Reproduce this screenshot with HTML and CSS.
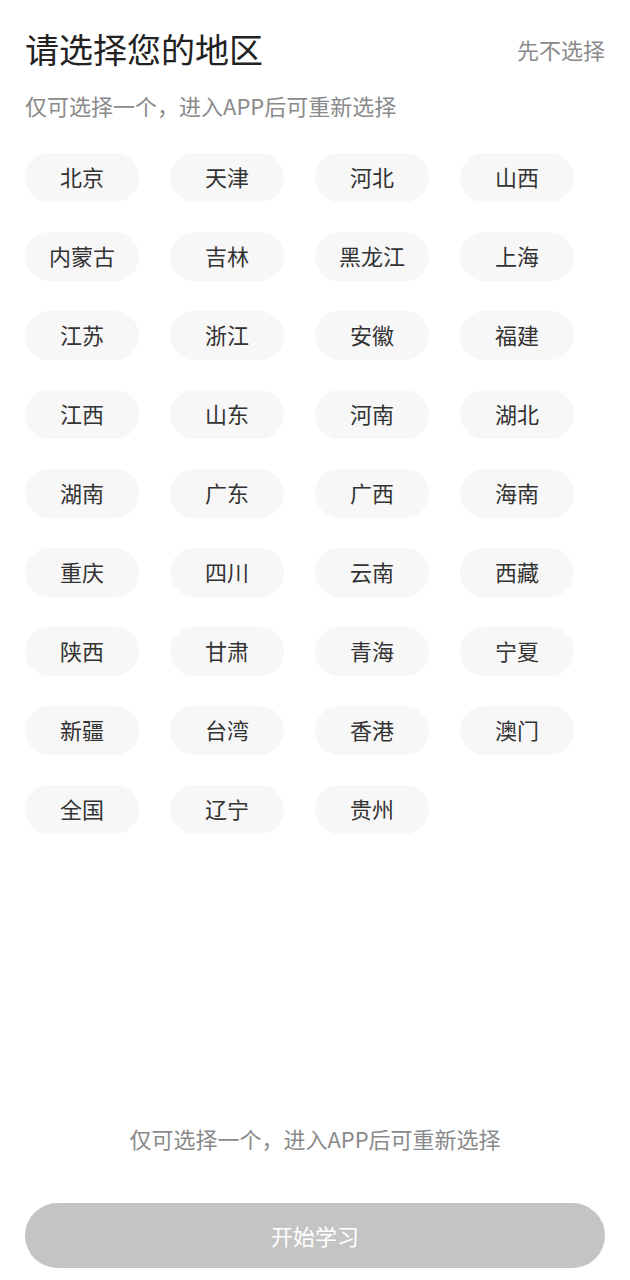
FILE: index.html
```html
<!DOCTYPE html>
<html lang="zh-CN">
<head>
<meta charset="utf-8">
<title>请选择您的地区</title>
<link rel="stylesheet" href="styles.css">
</head>
<body>
<div class="page">
  <header class="header">
    <h1 class="title">请选择您的地区</h1>
    <span class="skip">先不选择</span>
  </header>
  <p class="subtitle">仅可选择一个，进入APP后可重新选择</p>
  <div class="grid">
    <div class="chip">北京</div>
    <div class="chip">天津</div>
    <div class="chip">河北</div>
    <div class="chip">山西</div>
    <div class="chip">内蒙古</div>
    <div class="chip">吉林</div>
    <div class="chip">黑龙江</div>
    <div class="chip">上海</div>
    <div class="chip">江苏</div>
    <div class="chip">浙江</div>
    <div class="chip">安徽</div>
    <div class="chip">福建</div>
    <div class="chip">江西</div>
    <div class="chip">山东</div>
    <div class="chip">河南</div>
    <div class="chip">湖北</div>
    <div class="chip">湖南</div>
    <div class="chip">广东</div>
    <div class="chip">广西</div>
    <div class="chip">海南</div>
    <div class="chip">重庆</div>
    <div class="chip">四川</div>
    <div class="chip">云南</div>
    <div class="chip">西藏</div>
    <div class="chip">陕西</div>
    <div class="chip">甘肃</div>
    <div class="chip">青海</div>
    <div class="chip">宁夏</div>
    <div class="chip">新疆</div>
    <div class="chip">台湾</div>
    <div class="chip">香港</div>
    <div class="chip">澳门</div>
    <div class="chip">全国</div>
    <div class="chip">辽宁</div>
    <div class="chip">贵州</div>
  </div>
  <footer class="footer">
    <p class="note">仅可选择一个，进入APP后可重新选择</p>
    <button class="start" type="button">开始学习</button>
  </footer>
</div>
</body>
</html>
```

FILE: styles.css
```css
* { box-sizing: border-box; }
html, body {
  margin: 0;
  padding: 0;
  background: #ffffff;
  font-family: "Noto Sans CJK SC", "Noto Sans", sans-serif;
}
.page {
  height: 1280px;
  padding: 29px 25px 12px;
  display: flex;
  flex-direction: column;
}
.header {
  display: flex;
  justify-content: space-between;
  align-items: center;
  height: 40px;
}
.title {
  margin: 0;
  font-size: 34px;
  line-height: 40px;
  font-weight: 400;
  color: #222222;
}
.skip {
  font-size: 22px;
  line-height: 40px;
  color: #8a8a8a;
}
.subtitle {
  margin: 21px 0 0;
  font-size: 22px;
  line-height: 30px;
  color: #8a8a8a;
}
.grid {
  margin-top: 33px;
  display: grid;
  grid-template-columns: repeat(4, 114px);
  grid-auto-rows: 49px;
  column-gap: 31px;
  row-gap: 30px;
}
.chip {
  background: #f7f7f7;
  border-radius: 25px;
  display: flex;
  align-items: center;
  justify-content: center;
  padding-bottom: 3px;
  font-size: 22px;
  color: #333333;
}
.footer {
  margin-top: auto;
  display: flex;
  flex-direction: column;
  align-items: center;
}
.note {
  margin: 0;
  font-size: 22px;
  line-height: 30px;
  color: #8a8a8a;
}
.start {
  margin-top: 50px;
  width: 100%;
  height: 65px;
  border: none;
  border-radius: 33px;
  background: #c4c4c4;
  color: #ffffff;
  font-family: inherit;
  font-size: 22px;
  padding-bottom: 3px;
}
```
